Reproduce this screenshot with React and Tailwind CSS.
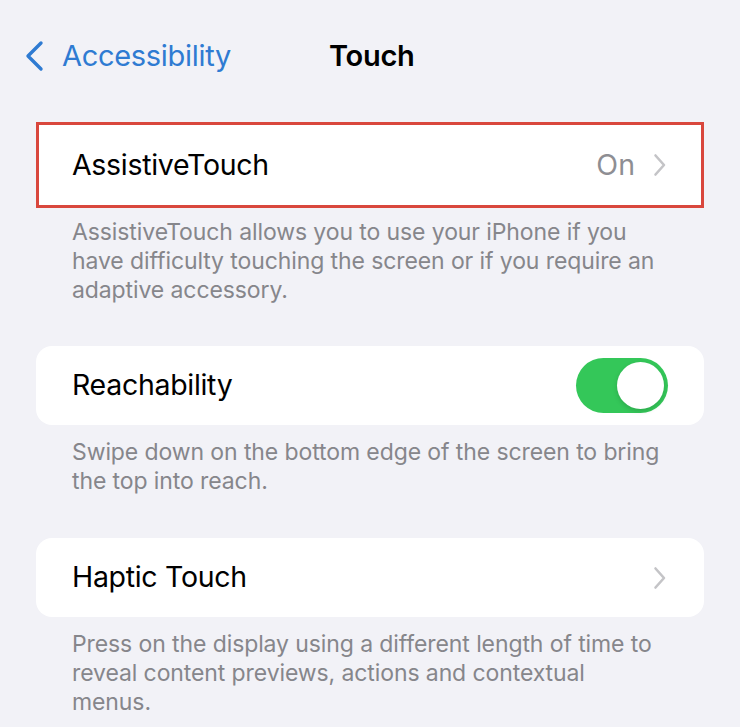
import React from 'react';

const font = { fontFamily: 'Inter, "Noto Sans", sans-serif' };

function Chevron({ className }) {
  return (
    <svg className={className} width="14" height="24" viewBox="0 0 14 24" fill="none">
      <path d="M2.5 2.5L11 12L2.5 21.5" stroke="currentColor" strokeWidth="2.6" strokeLinecap="round" strokeLinejoin="round" />
    </svg>
  );
}

function Toggle() {
  return (
    <div className="w-[92px] h-[55px] rounded-full bg-[#34c759] p-[4px] flex justify-end">
      <div className="w-[47px] h-[47px] rounded-full bg-white shadow-[0_2px_5px_rgba(0,0,0,0.15)]" />
    </div>
  );
}

function Footer({ children, top = 'pt-[13px]' }) {
  return (
    <p className={`pl-[36px] w-[628px] ${top} text-[23px] leading-[29px] text-[#86868b] tracking-[-0.1px]`}>
      {children}
    </p>
  );
}

export default function App() {
  return (
    <div className="w-[740px] h-[727px] bg-[#f2f2f7] overflow-hidden" style={font}>
      {/* Nav bar */}
      <div className="relative h-[110px] flex items-center px-[24px] pt-[2px]">
        <div className="flex items-center gap-[18px] text-[#2f7bd2]">
          <svg width="20" height="32" viewBox="0 0 20 32" fill="none">
            <path d="M17 3L4 16L17 29" stroke="currentColor" strokeWidth="3.4" strokeLinecap="round" strokeLinejoin="round" />
          </svg>
          <span className="text-[29px] tracking-[-0.3px]">Accessibility</span>
        </div>
        <span className="absolute left-[329px] top-[34px] text-[29px] font-semibold text-black tracking-[-0.3px]">Touch</span>
      </div>

      <div className="px-[36px] pt-[12px]">
        {/* AssistiveTouch */}
        <div className="h-[86px] bg-white border-[3px] border-[#d9473d] flex items-center justify-between pl-[33px] pr-[34px]">
          <span className="text-[28.5px] text-black tracking-[-0.3px]">AssistiveTouch</span>
          <div className="flex items-center gap-[18px] text-[#c4c4c7]">
            <span className="text-[28.5px] text-[#8e8e93]">On</span>
            <Chevron />
          </div>
        </div>
        <Footer top="pt-[10px]">
          AssistiveTouch allows you to use your iPhone if you have difficulty touching the screen or if you require an adaptive accessory.
        </Footer>

        {/* Reachability */}
        <div className="mt-[41px] h-[79px] bg-white rounded-[16px] flex items-center justify-between pl-[36px] pr-[36px]">
          <span className="text-[28.5px] text-black tracking-[-0.3px]">Reachability</span>
          <Toggle />
        </div>
        <Footer>
          Swipe down on the bottom edge of the screen to bring the top into reach.
        </Footer>

        {/* Haptic Touch */}
        <div className="mt-[42px] h-[79px] bg-white rounded-[16px] flex items-center justify-between pl-[36px] pr-[37px] text-[#c4c4c7]">
          <span className="text-[28.5px] text-black tracking-[-0.3px]">Haptic Touch</span>
          <Chevron />
        </div>
        <Footer>
          Press on the display using a different length of time to reveal content previews, actions and contextual menus.
        </Footer>
      </div>
    </div>
  );
}
